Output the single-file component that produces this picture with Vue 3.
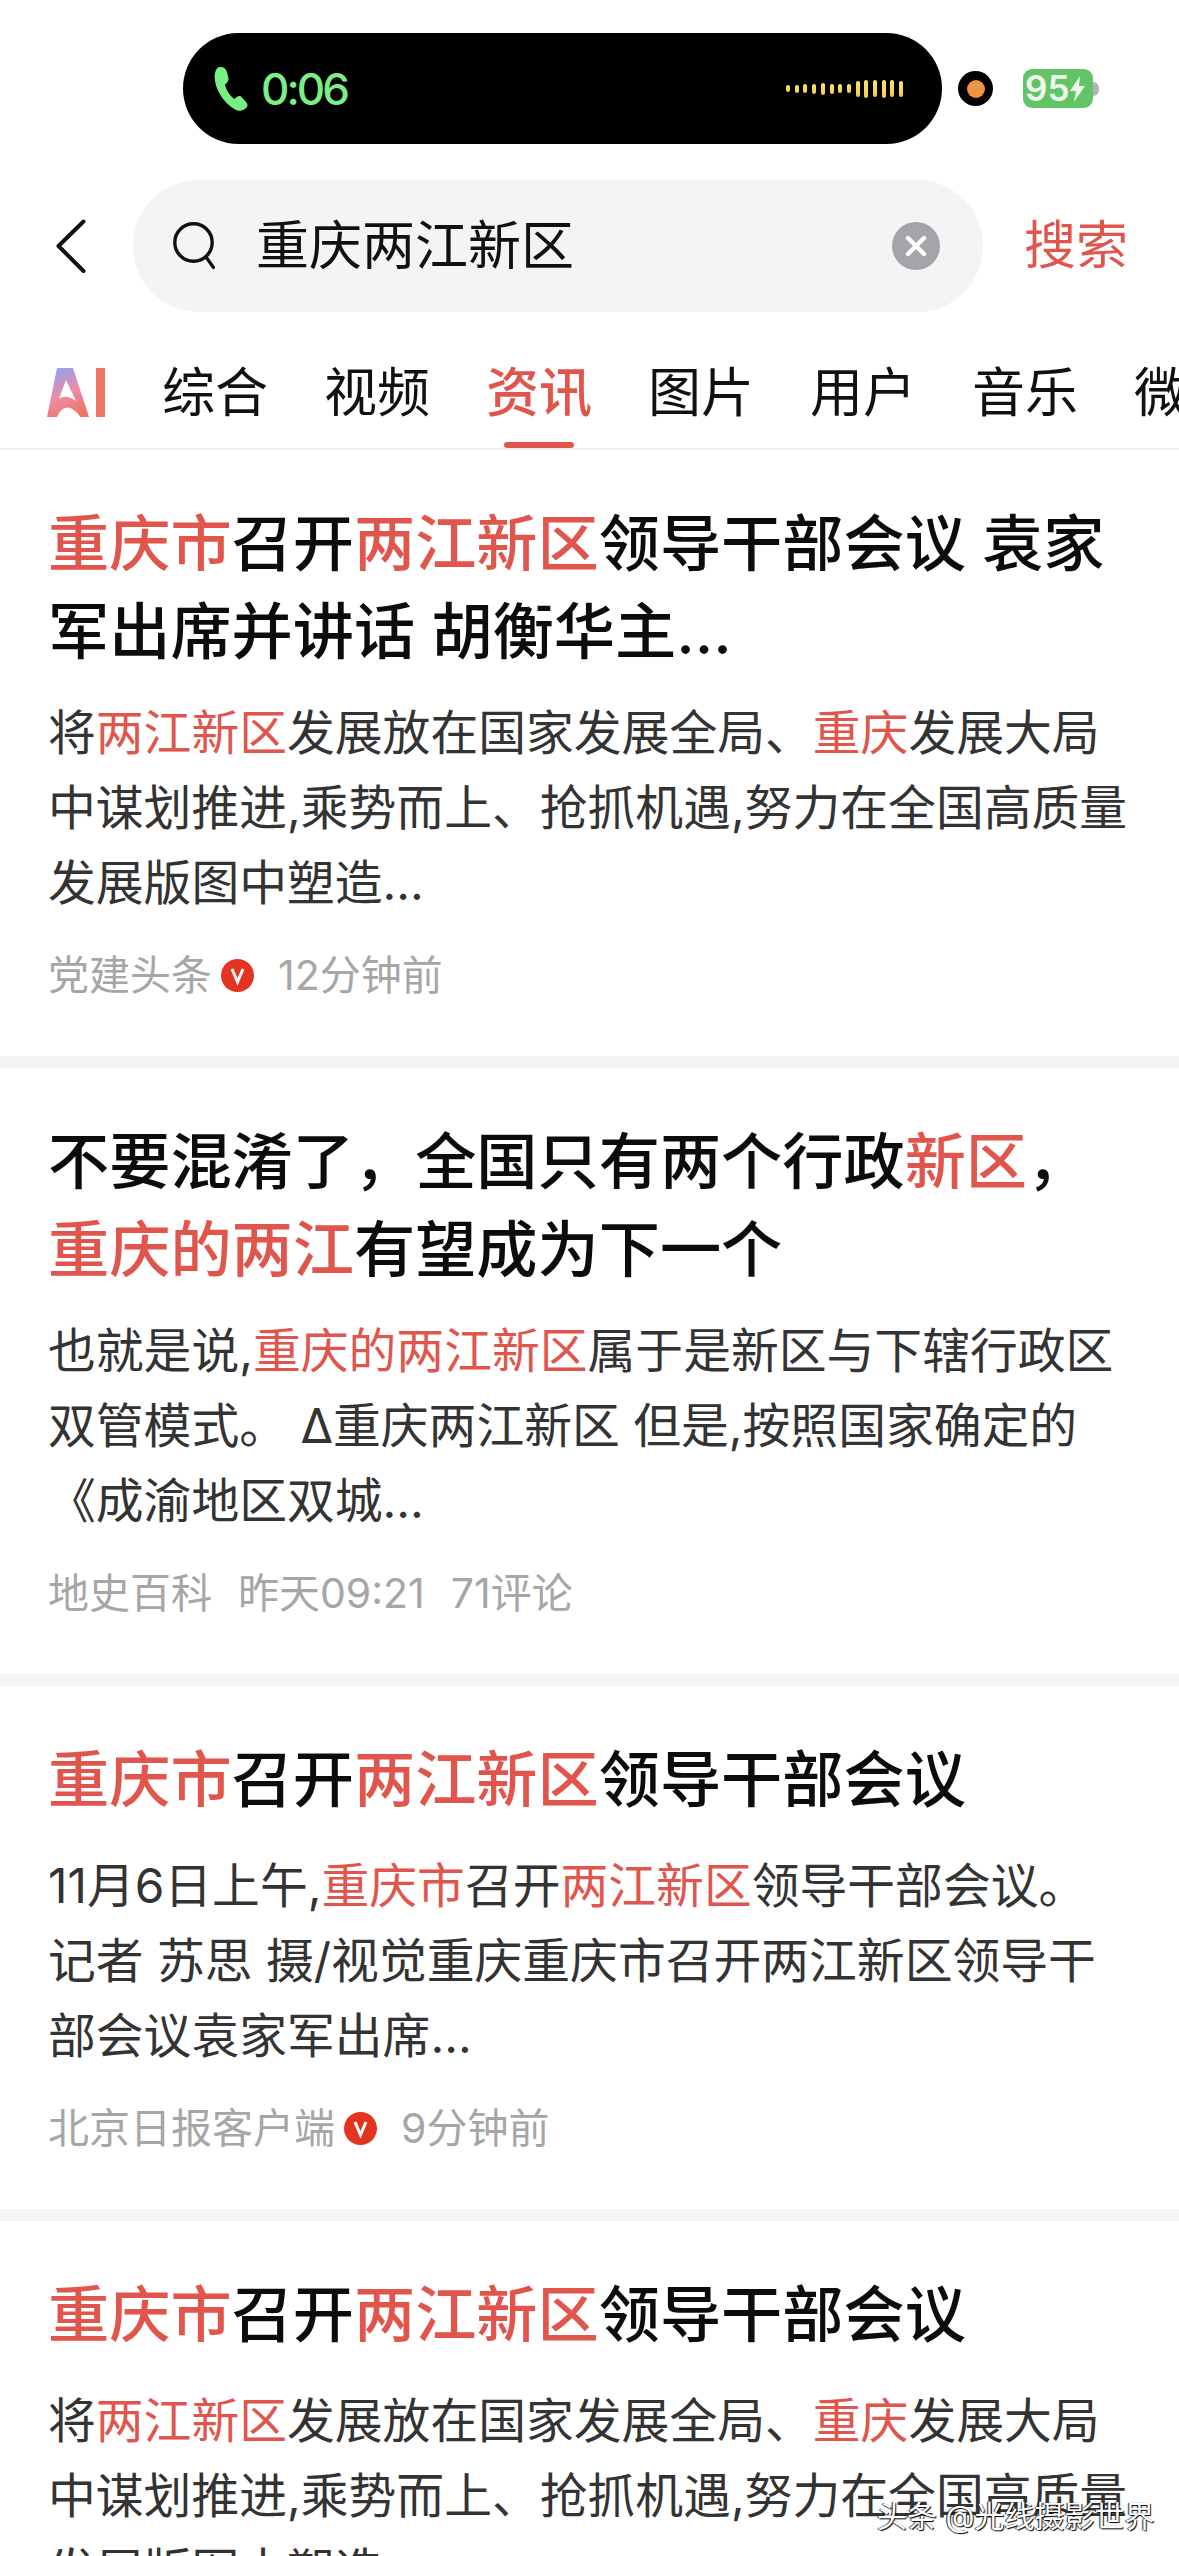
<script setup>
const parse = (line) =>
  line.split(/(\[[^\]]*\])/).filter(Boolean).map((s) =>
    s.startsWith('[') ? { t: s.slice(1, -1), red: true } : { t: s, red: false }
  )

const tabs = ['综合', '视频', '资讯', '图片', '用户', '音乐', '微博']

const waves = [7, 8, 9, 10, 12, 10, 9, 9, 16, 18, 17, 18, 17, 16]

const cards = [
  {
    title: ['[重庆市]召开[两江新区]领导干部会议 袁家', '军出席并讲话 胡衡华主...'],
    body: ['将[两江新区]发展放在国家发展全局、[重庆]发展大局', '中谋划推进,乘势而上、抢抓机遇,努力在全国高质量', '发展版图中塑造...'],
    meta: ['党建头条', '12分钟前'],
    verified: true
  },
  {
    title: ['不要混淆了，全国只有两个行政[新区]，', '[重庆的两江]有望成为下一个'],
    body: ['也就是说,[重庆的两江新区]属于是新区与下辖行政区', '双管模式。 ∆重庆两江新区 但是,按照国家确定的', '《成渝地区双城...'],
    meta: ['地史百科', '昨天09:21', '71评论'],
    verified: false
  },
  {
    title: ['[重庆市]召开[两江新区]领导干部会议'],
    body: ['11月6日上午,[重庆市]召开[两江新区]领导干部会议。', '记者 苏思 摄/视觉重庆重庆市召开两江新区领导干', '部会议袁家军出席...'],
    meta: ['北京日报客户端', '9分钟前'],
    verified: true
  },
  {
    title: ['[重庆市]召开[两江新区]领导干部会议'],
    body: ['将[两江新区]发展放在国家发展全局、[重庆]发展大局', '中谋划推进,乘势而上、抢抓机遇,努力在全国高质量', '发展版图中塑造...'],
    meta: [],
    verified: false
  }
]
</script>

<template>
  <div class="page">
    <header class="status">
      <div class="island">
        <svg class="phone" viewBox="0 0 34 46" width="34" height="46">
          <path d="M4 1.5 C8 0 12 2 13 6 L14.5 12 C15 15 13 17 11 18.5 C12 24 16 30 20.5 33 C22 32 24 29 27 30.5 L32 36 C34 38 34 40 32 42 C29 45 25 45.5 21 43.5 C10 37 1 24 0.6 11 C0.5 7 2 3 4 1.5 Z" fill="#79ee83" />
        </svg>
        <span class="time">0:06</span>
        <div class="wave">
          <i v-for="(h, i) in waves" :key="i" :style="{ height: h + 'px' }"></i>
        </div>
      </div>
      <div class="rec"><i></i></div>
      <div class="battery">
        <div class="battery-body">
          <span>95</span>
          <svg viewBox="0 0 17 26" width="17" height="26"><path d="M11 0 L1 15 H7 L5 26 L16 10 H10 Z" fill="#eef8ee" /></svg>
        </div>
        <div class="battery-cap"></div>
      </div>
    </header>

    <div class="search-row">
      <svg class="back" viewBox="0 0 30 54" width="30" height="54">
        <path d="M27.5 2.5 L2.5 27 L27.5 52" fill="none" stroke="#111" stroke-width="4" stroke-linecap="round" stroke-linejoin="round" />
      </svg>
      <div class="search">
        <svg class="glass" viewBox="0 0 42 48" width="42" height="48">
          <circle cx="20.5" cy="20.5" r="18.7" fill="none" stroke="#111" stroke-width="3.4" />
          <path d="M33 35 L40.5 45.5" stroke="#111" stroke-width="3.2" stroke-linecap="round" />
        </svg>
        <span class="query">重庆两江新区</span>
        <svg class="clear" viewBox="0 0 48 48" width="48" height="48">
          <circle cx="24" cy="24" r="24" fill="#a3a5a8" />
          <path d="M16 16 L32 32 M32 16 L16 32" stroke="#fff" stroke-width="4.4" stroke-linecap="round" />
        </svg>
      </div>
      <span class="go">搜索</span>
    </div>

    <nav class="tabs">
      <svg class="ai" viewBox="0 0 60 50" width="60" height="50">
        <defs>
          <linearGradient id="aiGrad" x1="0.25" y1="0" x2="0.6" y2="1">
            <stop offset="0" stop-color="#93a4f0" />
            <stop offset="0.55" stop-color="#f08aa4" />
            <stop offset="1" stop-color="#ec7565" />
          </linearGradient>
        </defs>
        <path d="M11 0 H27 L43 49 H34 C32 44 28 42 24 40 C19 38 14 42 11 49 H1 Z M20 12 L13 31 C18 27 24 29 30 33 Z" fill="url(#aiGrad)" fill-rule="evenodd" />
        <rect x="50" y="0" width="9" height="49" fill="#ec7565" />
      </svg>
      <div v-for="t in tabs" :key="t" class="tab" :class="{ active: t === '资讯' }">{{ t }}</div>
    </nav>

    <main class="list">
      <article v-for="(c, i) in cards" :key="i" class="card" :class="{ single: c.title.length === 1 }">
        <h2 class="title">
          <div v-for="(l, j) in c.title" :key="j" class="line">
            <span v-for="(s, k) in parse(l)" :key="k" :class="{ red: s.red }">{{ s.t }}</span>
          </div>
        </h2>
        <div class="body">
          <div v-for="(l, j) in c.body" :key="j" class="line">
            <span v-for="(s, k) in parse(l)" :key="k" :class="{ red: s.red }">{{ s.t }}</span>
          </div>
        </div>
        <div v-if="c.meta.length" class="meta">
          <span>{{ c.meta[0] }}</span>
          <svg v-if="c.verified" class="v" viewBox="0 0 33 33" width="33" height="33">
            <circle cx="16.5" cy="16.5" r="16.5" fill="#e2341f" />
            <path d="M11 10 L16.5 23 L22 10" fill="none" stroke="#fff" stroke-width="3" />
          </svg>
          <span v-for="m in c.meta.slice(1)" :key="m">{{ m }}</span>
        </div>
      </article>
    </main>

    <div class="mark">头条 @光线摄影世界</div>
  </div>
</template>

<style>
html, body { margin: 0; background: #fff; overflow: hidden; }
</style>

<style scoped>
.page {
  position: relative;
  width: 1179px;
  height: 2556px;
  overflow: hidden;
  background: #fff;
  font-family: Inter, "Noto Sans CJK SC", "Noto Sans", sans-serif;
  color: #111;
}
.status {
  display: flex;
  align-items: center;
  height: 111px;
  padding: 33px 0 0 183px;
  box-sizing: content-box;
}
.island {
  width: 759px;
  height: 111px;
  border-radius: 56px;
  background: #000;
  display: flex;
  align-items: center;
  padding: 0 39px 0 31px;
  box-sizing: border-box;
}
.phone { flex: none; }
.time {
  margin-left: 13px;
  font: 500 44px/1 Inter, sans-serif;
  letter-spacing: -3px;
  color: #7bee86;
}
.wave {
  margin-left: auto;
  display: flex;
  align-items: center;
  gap: 4.7px;
}
.wave i {
  display: block;
  width: 4px;
  border-radius: 2px;
  background: linear-gradient(#fbe46e, #f5c94c);
}
.rec {
  width: 35px;
  height: 35px;
  margin-left: 16px;
  border-radius: 50%;
  background: #000;
  display: flex;
  align-items: center;
  justify-content: center;
}
.rec i {
  display: block;
  width: 18px;
  height: 18px;
  border-radius: 50%;
  background: #ef9440;
}
.battery {
  margin-left: 30px;
  display: flex;
  align-items: center;
}
.battery-body {
  width: 70px;
  height: 39px;
  border-radius: 9px;
  background: #62c466;
  display: flex;
  align-items: center;
  padding-left: 2px;
  box-sizing: border-box;
  color: #eef8ee;
  font: 600 35px/1 Inter, sans-serif;
}
.battery-cap {
  width: 6px;
  height: 14px;
  border-radius: 0 7px 7px 0;
  background: #b5b5b5;
}
.search-row {
  display: flex;
  align-items: center;
  margin-top: 36px;
  padding-left: 56px;
}
.back { flex: none; }
.search {
  margin-left: 47px;
  width: 850px;
  height: 132px;
  border-radius: 66px;
  background: #f3f4f6;
  display: flex;
  align-items: center;
  padding: 0 43px 0 40px;
  box-sizing: border-box;
}
.query {
  margin-left: 41px;
  font-size: 53px;
  line-height: 1;
}
.clear { margin-left: auto; }
.go {
  margin-left: 41px;
  font-size: 52px;
  line-height: 1;
  color: #e0564d;
}
.tabs {
  display: flex;
  align-items: center;
  height: 138px;
  padding: 26px 0 0 46px;
  box-sizing: border-box;
  border-bottom: 2px solid #f0f0f0;
  white-space: nowrap;
  overflow: hidden;
}
.ai { flex: none; margin-right: 56px; }
.tab {
  position: relative;
  flex: none;
  width: 106px;
  margin-right: 56px;
  font-size: 53px;
  line-height: 1;
  text-align: center;
}
.tab.active { color: #e0564d; font-weight: 500; }
.tab.active::after {
  content: "";
  position: absolute;
  left: 18px;
  right: 18px;
  bottom: -28px;
  height: 6px;
  border-radius: 3px;
  background: #e0564d;
}
.card {
  padding: 50px 48px 56px;
  border-bottom: 12px solid #f3f4f6;
}
.title {
  margin: 0;
  font-size: 61.2px;
  line-height: 88px;
  font-weight: 500;
  color: #0c0c0c;
}
.body {
  margin-top: 20px;
  font-size: 47.8px;
  line-height: 75px;
  color: #333;
}
.single .body { margin-top: 25px; }
.line { white-space: nowrap; }
.red { color: #e0564d; }
.meta {
  display: flex;
  align-items: center;
  gap: 26px;
  margin-top: 29px;
  height: 50px;
  font-size: 41px;
  line-height: 50px;
  color: #a6a6a6;
}
.v { flex: none; margin: 0 -2px 0 -17px; }
.mark {
  position: absolute;
  left: 877px;
  top: 2498px;
  font-size: 30px;
  line-height: 36px;
  color: #fff;
  text-shadow: 1px 1px 1px #000, -1px 0 1px #222;
  white-space: nowrap;
}
</style>
